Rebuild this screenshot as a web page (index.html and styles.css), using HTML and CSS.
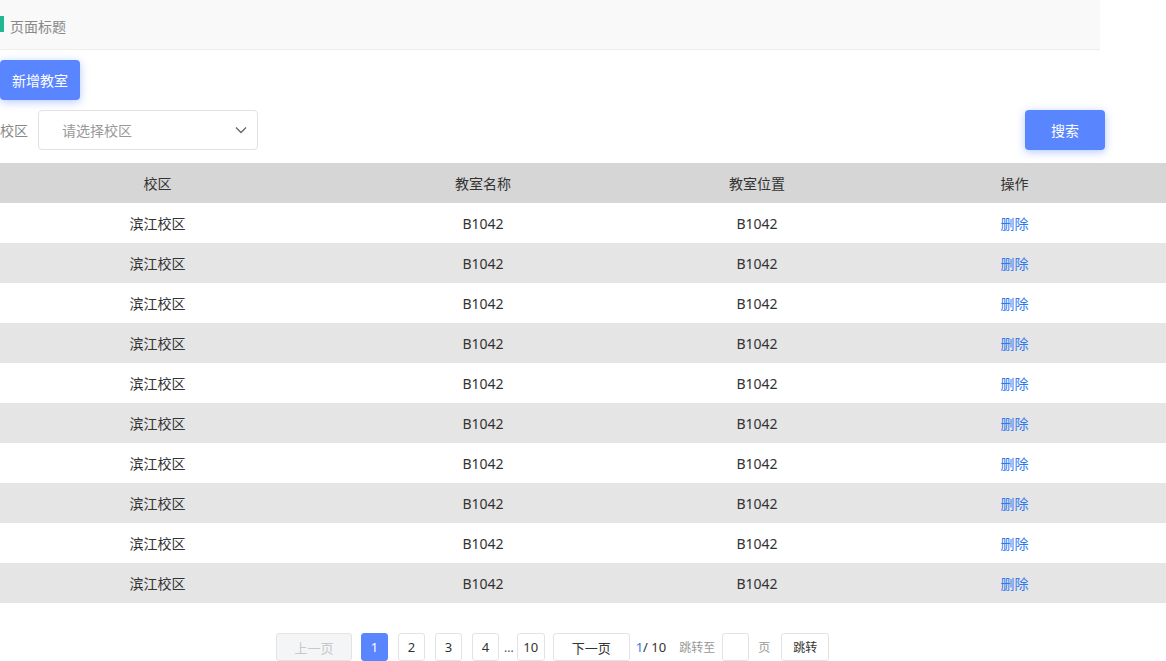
FILE: index.html
```html
<!DOCTYPE html>
<html lang="zh-CN">
<head>
<meta charset="utf-8">
<title>教室管理</title>
<link rel="stylesheet" href="styles.css">
</head>
<body>
<div class="header"><span class="bar"></span><span class="title">页面标题</span></div>
<div class="toolbar"><button class="btn primary add">新增教室</button></div>
<div class="filter">
  <div class="filter-left">
    <span class="label">校区</span>
    <div class="select"><span class="placeholder">请选择校区</span>
      <svg class="chev" width="14" height="14" viewBox="0 0 14 14"><path d="M2 4.5 L7 9.5 L12 4.5" fill="none" stroke="#666" stroke-width="1.3"/></svg>
    </div>
  </div>
  <button class="btn primary search">搜索</button>
</div>
<div class="table">
  <div class="row head"><div>校区</div><div>教室名称</div><div>教室位置</div><div>操作</div></div>
  <div class="row"><div>滨江校区</div><div>B1042</div><div>B1042</div><div class="link">删除</div></div>
  <div class="row alt"><div>滨江校区</div><div>B1042</div><div>B1042</div><div class="link">删除</div></div>
  <div class="row"><div>滨江校区</div><div>B1042</div><div>B1042</div><div class="link">删除</div></div>
  <div class="row alt"><div>滨江校区</div><div>B1042</div><div>B1042</div><div class="link">删除</div></div>
  <div class="row"><div>滨江校区</div><div>B1042</div><div>B1042</div><div class="link">删除</div></div>
  <div class="row alt"><div>滨江校区</div><div>B1042</div><div>B1042</div><div class="link">删除</div></div>
  <div class="row"><div>滨江校区</div><div>B1042</div><div>B1042</div><div class="link">删除</div></div>
  <div class="row alt"><div>滨江校区</div><div>B1042</div><div>B1042</div><div class="link">删除</div></div>
  <div class="row"><div>滨江校区</div><div>B1042</div><div>B1042</div><div class="link">删除</div></div>
  <div class="row alt"><div>滨江校区</div><div>B1042</div><div>B1042</div><div class="link">删除</div></div>
</div>
<div class="pager">
  <span class="pb prev disabled">上一页</span>
  <span class="pb num active">1</span>
  <span class="pb num">2</span>
  <span class="pb num">3</span>
  <span class="pb num">4</span>
  <span class="dots">...</span>
  <span class="pb num ten">10</span>
  <span class="pb next">下一页</span>
  <span class="count"><span class="cur">1</span>/ 10</span>
  <span class="jump-label">跳转至</span>
  <span class="pb input"></span>
  <span class="page-label">页</span>
  <span class="pb go">跳转</span>
</div>
</body>
</html>
```
FILE: styles.css
```css
* { box-sizing: border-box; }
body {
  margin: 0;
  font-family: "Noto Sans", "Noto Sans CJK SC", sans-serif;
  font-size: 14px;
  color: #333;
  background: #fff;
}
.header {
  width: 1100px;
  height: 50px;
  background: #f9f9f9;
  border-bottom: 1px solid #eeeeee;
  display: flex;
  align-items: center;
}
.bar {
  width: 4px;
  height: 16px;
  background: #1fb88f;
  margin-top: -2px;
}
.title {
  margin-left: 6px;
  font-size: 14px;
  color: #888;
  margin-top: 2px;
}
.toolbar { padding-top: 10px; height: 60px; }
.btn {
  border: none;
  border-radius: 4px;
  font-family: inherit;
  font-size: 14px;
  color: #fff;
  height: 40px;
  padding: 0;
  cursor: pointer;
}
.primary {
  background: #5985ff;
  box-shadow: 0 2px 8px rgba(89, 133, 255, 0.45);
}
.add { width: 80px; }
.search { width: 80px; }
.filter {
  display: flex;
  align-items: center;
  justify-content: space-between;
  width: 1105px;
  height: 40px;
}
.filter-left { display: flex; align-items: center; }
.label { color: #888; width: 38px; }
.select {
  width: 220px;
  height: 40px;
  border: 1px solid #e2e2e2;
  border-radius: 4px;
  display: flex;
  align-items: center;
  justify-content: space-between;
  padding: 0 9px 0 23px;
}
.placeholder { color: #999; }
.chev { display: block; }
.table { margin-top: 13px; width: 1166px; }
.row {
  display: grid;
  grid-template-columns: 315px 336px 212px 303px;
  height: 40px;
  align-items: center;
  text-align: center;
  background: #fff;
}
.row.alt { background: #e5e5e5; }
.row.head { background: #d6d6d6; }
.link { color: #2f79f0; }
.pager {
  display: flex;
  align-items: center;
  padding-left: 276px;
  margin-top: 30px;
  font-size: 13px;
}
.pb {
  height: 28px;
  border: 1px solid #e3e3e3;
  border-radius: 3px;
  display: flex;
  align-items: center;
  justify-content: center;
  background: #fff;
  color: #333;
}
.prev { width: 76px; margin-right: 9px; }
.disabled { background: #f4f5f7; color: #c8c8c8; }
.num { width: 27px; margin-right: 10px; }
.active { background: #5985ff; border-color: #5985ff; color: #fff; }
.dots { margin-left: -5px; margin-right: 3px; color: #555; font-size: 12px; }
.ten { width: 28px; margin-right: 8px; }
.next { width: 77px; margin-right: 6px; }
.count { font-size: 13px; color: #333; margin-right: 13px; }
.cur { color: #2f79f0; }
.jump-label { color: #999; font-size: 12px; margin-right: 7px; }
.input { width: 27px; margin-right: 9px; }
.page-label { color: #999; font-size: 12px; margin-right: 11px; }
.go { width: 48px; font-size: 12px; }
```
